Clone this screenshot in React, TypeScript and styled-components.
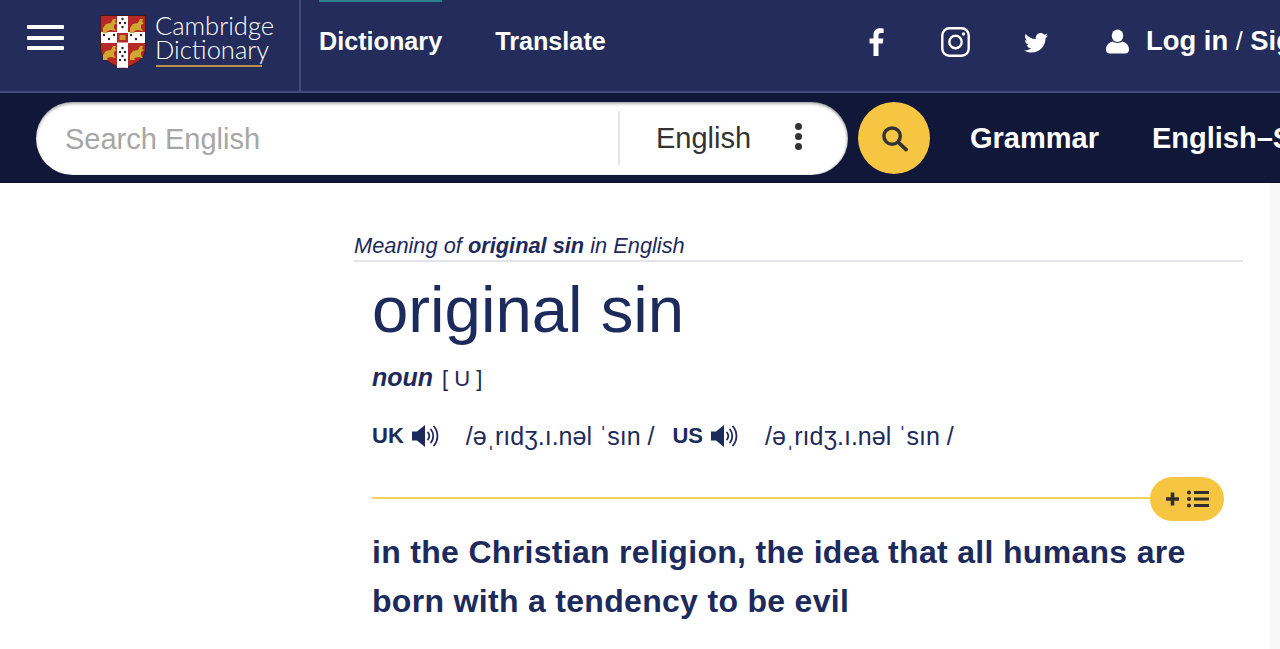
import React from "react";
import styled, { createGlobalStyle } from "styled-components";

const Global = createGlobalStyle`
  html, body { margin: 0; padding: 0; background: #fff; overflow: hidden; height: 649px; }
  body { font-family: "Liberation Sans", Arial, sans-serif; color: #1d2a5c; }
`;

const Page = styled.div`
  width: 1280px;
  height: 649px;
  overflow: hidden;
  display: flex;
  flex-direction: column;
`;

const TopBar = styled.header`
  height: 91px;
  flex: none;
  background: #232c5a;
  border-bottom: 2px solid #434c78;
  display: flex;
  align-items: stretch;
  white-space: nowrap;
  overflow: hidden;
`;

const Burger = styled.div`
  width: 37px;
  flex: none;
  margin: 25px 36px 0 27px;
  display: flex;
  flex-direction: column;
  gap: 6.5px;
  align-self: flex-start;
`;

const BurgerLine = styled.span`
  display: block;
  height: 4px;
  border-radius: 1px;
  background: #fff;
`;

const Brand = styled.div`
  width: 201px;
  flex: none;
  border-right: 2px solid #434c78;
  display: flex;
  gap: 9px;
  padding-top: 15px;
  box-sizing: border-box;
`;

const WordMark = styled.div`
  display: flex;
  flex-direction: column;
  font-family: Lato, "Open Sans", sans-serif;
  font-weight: 300;
  font-size: 25.5px;
  line-height: 24px;
  color: #fff;
  margin-top: -2px;
`;

const WordUnderline = styled.span`
  display: block;
  width: 106px;
  height: 2px;
  margin: 4px 0 0 1px;
  background: #b8924a;
`;

const MainNav = styled.nav`
  display: flex;
  gap: 53px;
  padding: 0 0 0 18px;
  width: 550px;
  flex: none;
  box-sizing: border-box;
`;

const MainLink = styled.a<{ $active?: boolean }>`
  font-size: 25.2px;
  font-weight: 700;
  color: #fff;
  padding-top: 26px;
  line-height: 30px;
  height: 66px;
  box-shadow: ${(p) => (p.$active ? "inset 0 2px 0 #2b7f8f" : "none")};
`;

const Social = styled.div`
  display: flex;
  flex: none;
  align-items: center;
  gap: 54px;
  padding: 0 0 7px 18px;
`;

const SocialIcon = styled.svg<{ $nudge?: number }>`
  display: block;
  fill: #fff;
  flex: none;
  margin-top: ${(p) => p.$nudge ?? 0}px;
`;

const FacebookIcon = styled(SocialIcon)`
  margin-right: 3px;
`;

const Account = styled.div`
  display: flex;
  flex: none;
  align-items: center;
  gap: 17px;
  margin-left: 4px;
  margin-top: -2px;
  font-size: 27.4px;
  font-weight: 700;
  color: #fff;
`;

const Slash = styled.span`
  font-weight: 400;
  font-size: 25px;
`;

const SearchBar = styled.div`
  height: 90px;
  flex: none;
  box-sizing: border-box;
  background: #111739;
  border-bottom: 1px solid #0b0f2a;
  display: flex;
  align-items: center;
  padding: 1px 0 0 36px;
  white-space: nowrap;
  overflow: hidden;
`;

const SearchBox = styled.div`
  width: 812px;
  height: 73px;
  flex: none;
  box-sizing: border-box;
  background: #fff;
  border-radius: 37px;
  display: flex;
  align-items: center;
  box-shadow: inset 0 2px 3px rgba(0, 0, 0, 0.3), inset -1px 0 2px rgba(0, 0, 0, 0.2);
`;

const Placeholder = styled.div`
  width: 582px;
  flex: none;
  box-sizing: border-box;
  padding: 3px 0 0 29px;
  font-size: 29px;
  color: #a6a6a6;
`;

const LangSelect = styled.div`
  height: 54px;
  flex: 1;
  border-left: 2px solid #e4e5ea;
  display: flex;
  align-items: center;
  padding-left: 36px;
  gap: 44px;
  font-size: 29px;
  color: #333;
`;

const Dots = styled.div`
  display: flex;
  flex-direction: column;
  gap: 3px;
  margin-top: -3px;
`;

const Dot = styled.span`
  width: 7px;
  height: 7px;
  border-radius: 50%;
  background: #333;
`;

const SearchButton = styled.div`
  width: 72px;
  height: 72px;
  flex: none;
  margin-left: 10px;
  border-radius: 50%;
  background: #f6c642;
  display: flex;
  align-items: center;
  justify-content: center;
`;

const SubNav = styled.nav`
  display: flex;
  flex: none;
  gap: 53px;
  margin-left: 40px;
`;

const SubLink = styled.a`
  font-size: 29px;
  font-weight: 700;
  color: #fff;
`;

const Body = styled.main`
  flex: 1;
  display: flex;
  min-height: 0;
`;

const Gutter = styled.div`
  width: 354px;
  flex: none;
`;

const Content = styled.article`
  width: 889px;
  flex: none;
  padding-top: 50px;
`;

const Rail = styled.div`
  flex: 1;
  display: flex;
  justify-content: flex-end;
`;

const RailEdge = styled.div`
  width: 10px;
  background: #f8f8f8;
`;

const Meaning = styled.div`
  font-size: 21.8px;
  line-height: 26px;
  font-style: italic;
  padding-bottom: 1px;
  border-bottom: 2px solid #e2e3e6;
`;

const Entry = styled.div`
  padding-left: 18px;
  width: 852px;
`;

const HeadWord = styled.h1`
  margin: 11px 0 0;
  font-size: 65.3px;
  line-height: 74px;
  font-weight: 400;
`;

const PosRow = styled.div`
  margin-top: 16px;
  display: flex;
  align-items: baseline;
  gap: 9px;
  line-height: 28px;
`;

const Pos = styled.b`
  font-style: italic;
  font-weight: 700;
  font-size: 25px;
`;

const Grammar = styled.span`
  font-size: 22px;
`;

const PronRow = styled.div`
  margin-top: 28px;
  display: flex;
  align-items: center;
  height: 30px;
`;

const Region = styled.b`
  font-size: 22px;
  font-weight: 700;
  margin-right: 7px;
`;

const Speaker = styled.svg`
  display: block;
  flex: none;
  color: #1d2a5c;
`;

const Ipa = styled.span<{ $gap: number }>`
  font-family: "Liberation Sans", "DejaVu Sans", sans-serif;
  font-size: 25px;
  margin: 0 ${(p) => p.$gap}px 0 25px;
  white-space: nowrap;
`;

const Rule = styled.div`
  margin-top: 26px;
  height: 44px;
  display: flex;
  align-items: center;
  width: 852px;
`;

const RuleLine = styled.div`
  flex: 1;
  height: 2px;
  margin-bottom: 3px;
  background: #f6cf5c;
`;

const AddPill = styled.div`
  width: 74px;
  height: 44px;
  flex: none;
  border-radius: 22px;
  background: #f6c642;
  display: flex;
  align-items: center;
  justify-content: center;
`;

const Definition = styled.p`
  margin: 7px 0 0;
  font-size: 32px;
  line-height: 49px;
  font-weight: 700;
  letter-spacing: 0.31px;
`;

const lions: [number, number][] = [[3, 3], [30, 3], [3, 30], [30, 30]];
const spots: [number, number][] = [
  [22.5, 4], [20, 8], [25, 8], [22.5, 12],
  [4, 20], [9, 24], [14, 20], [31, 20], [36, 24], [41, 20],
  [22.5, 33], [20, 37], [25, 37], [22.5, 41], [20, 45], [25, 45],
];

const Shield = () => (
  <svg width="46" height="54" viewBox="0 0 46 54" style={{ flex: "none" }}>
    <path d="M0.5 0.5H45.5V33C45.500 44 34 50 23 53.500C12 50 0.500 44 0.500 33Z" fill="#b52a26" stroke="#3a1512" strokeWidth="0.8" />
    <path d="M17 1H28V17H45V28H28V53C25 52.500 20 52.500 17 53V28H1V17H17Z" fill="#fff" />
    <rect x="17" y="18" width="11" height="9.500" fill="#b52a26" />
    <rect x="19.500" y="20" width="6" height="5" fill="#c9982f" />
    {lions.map(([x, y]) => (
      <path
        key={`${x}-${y}`}
        d={`M${x} ${y + 10}l3-4 5-1 2-4 3 0-1 3 2 1-3 2 0 3 2 3-5-1-4 1 1 2-5 0z`}
        fill="#cfa92f"
      />
    ))}
    {spots.map(([x, y]) => (
      <circle key={`${x}-${y}`} cx={x} cy={y} r="1.200" fill="#222" />
    ))}
  </svg>
);

const SpeakerIcon = () => (
  <Speaker width="30" height="26" viewBox="0 0 30 26" fill="none">
    <path d="M1 8.500H6L14 2V24L6 17.500H1Z" fill="currentColor" />
    <path d="M17 9.500C18.600 11.600 18.600 14.400 17 16.500M20 6.500C23 10 23 16 20 19.500M23 3.500C27.600 9 27.600 17 23 22.500" stroke="currentColor" strokeWidth="1.800" strokeLinecap="round" />
  </Speaker>
);

export default function App() {
  return (
    <Page>
      <Global />
      <TopBar>
        <Burger>
          <BurgerLine />
          <BurgerLine />
          <BurgerLine />
        </Burger>
        <Brand>
          <Shield />
          <WordMark>
            <span>Cambridge</span>
            <span>Dictionary</span>
            <WordUnderline />
          </WordMark>
        </Brand>
        <MainNav>
          <MainLink $active>Dictionary</MainLink>
          <MainLink>Translate</MainLink>
        </MainNav>
        <Social>
          <FacebookIcon width="15" height="28" viewBox="0 0 15 28">
            <path d="M4.500 28V15.500H0.500V10.500H4.500V7C4.500 2.600 7 0.300 11 0.300C12.600 0.300 14 0.400 14.600 0.500V5H12C9.900 5 9.500 6 9.500 7.400V10.500H14.400L13.700 15.500H9.500V28Z" />
          </FacebookIcon>
          <SocialIcon width="29" height="30" viewBox="0 0 29 30" fill="none">
            <rect x="1.300" y="1.300" width="26.400" height="27.400" rx="7" fill="none" stroke="#fff" strokeWidth="2.400" />
            <circle cx="14.500" cy="15" r="6.200" fill="none" stroke="#fff" strokeWidth="2.400" />
            <circle cx="22.500" cy="7" r="1.700" />
          </SocialIcon>
          <SocialIcon $nudge={2} width="24" height="20" viewBox="0 0 24 20">
            <path d="M24 2.400c-.9.400-1.800.7-2.800.8 1-.6 1.800-1.600 2.200-2.700-1 .6-2 1-3.100 1.200C19.300.7 18 0 16.600 0c-2.700 0-4.900 2.200-4.900 4.900 0 .4 0 .8.100 1.100C7.700 5.800 4.100 3.800 1.700.9c-.4.700-.7 1.600-.7 2.500 0 1.700.9 3.200 2.200 4.100-.8 0-1.600-.2-2.200-.6v.1c0 2.400 1.700 4.400 3.900 4.800-.4.100-.8.200-1.300.2-.3 0-.6 0-.9-.100.6 2 2.400 3.400 4.600 3.400-1.700 1.300-3.800 2.100-6.100 2.100-.4 0-.8 0-1.200-.1C2.200 18.800 4.800 19.600 7.500 19.600c9.100 0 14-7.500 14-14v-.6c1-.7 1.800-1.600 2.500-2.600z" />
          </SocialIcon>
          <Account>
            <SocialIcon width="23" height="25" viewBox="0 0 24 25">
              <ellipse cx="12" cy="6.500" rx="6" ry="6.500" />
              <path d="M0 21C0 16 3 13.500 7 12.500C9.500 14.500 14.500 14.500 17 12.500C21 13.500 24 16 24 21C24 23.500 22.500 25 20 25H4C1.500 25 0 23.500 0 21Z" />
            </SocialIcon>
            <span>
              Log in <Slash>/</Slash> Sign up
            </span>
          </Account>
        </Social>
      </TopBar>
      <SearchBar>
        <SearchBox>
          <Placeholder>Search English</Placeholder>
          <LangSelect>
            English
            <Dots>
              <Dot />
              <Dot />
              <Dot />
            </Dots>
          </LangSelect>
        </SearchBox>
        <SearchButton>
          <svg width="27" height="27" viewBox="0 0 28 28" fill="none">
            <circle cx="11.500" cy="11.500" r="8.500" stroke="#333" strokeWidth="3.600" />
            <path d="M18 18L26 25.500" stroke="#333" strokeWidth="3.800" strokeLinecap="round" />
          </svg>
        </SearchButton>
        <SubNav>
          <SubLink>Grammar</SubLink>
          <SubLink>English–Spanish</SubLink>
        </SubNav>
      </SearchBar>
      <Body>
        <Gutter />
        <Content>
          <Meaning>
            Meaning of <b>original sin</b> in English
          </Meaning>
          <Entry>
            <HeadWord>original sin</HeadWord>
            <PosRow>
              <Pos>noun</Pos>
              <Grammar>[ U ]</Grammar>
            </PosRow>
            <PronRow>
              <Region>UK</Region>
              <SpeakerIcon />
              <Ipa $gap={18}>/əˌrıdʒ.ı.nəl ˈsın /</Ipa>
              <Region>US</Region>
              <SpeakerIcon />
              <Ipa $gap={0}>/əˌrıdʒ.ı.nəl ˈsın /</Ipa>
            </PronRow>
            <Rule>
              <RuleLine />
              <AddPill>
                <svg width="46" height="20" viewBox="0 0 46 20" fill="none" stroke="#2f2f2f">
                  <path d="M2 10H15M8.500 3.500V16.500" strokeWidth="3.600" />
                  <path d="M30 3.500H45M30 10H45M30 16.500H45" strokeWidth="2.800" />
                  <circle cx="25" cy="3.500" r="2" fill="#2f2f2f" stroke="none" />
                  <circle cx="25" cy="10" r="2" fill="#2f2f2f" stroke="none" />
                  <circle cx="25" cy="16.500" r="2" fill="#2f2f2f" stroke="none" />
                </svg>
              </AddPill>
            </Rule>
            <Definition>
              in the Christian religion, the idea that all humans are
              <br />
              born with a tendency to be evil
            </Definition>
          </Entry>
        </Content>
        <Rail>
          <RailEdge />
        </Rail>
      </Body>
    </Page>
  );
}
